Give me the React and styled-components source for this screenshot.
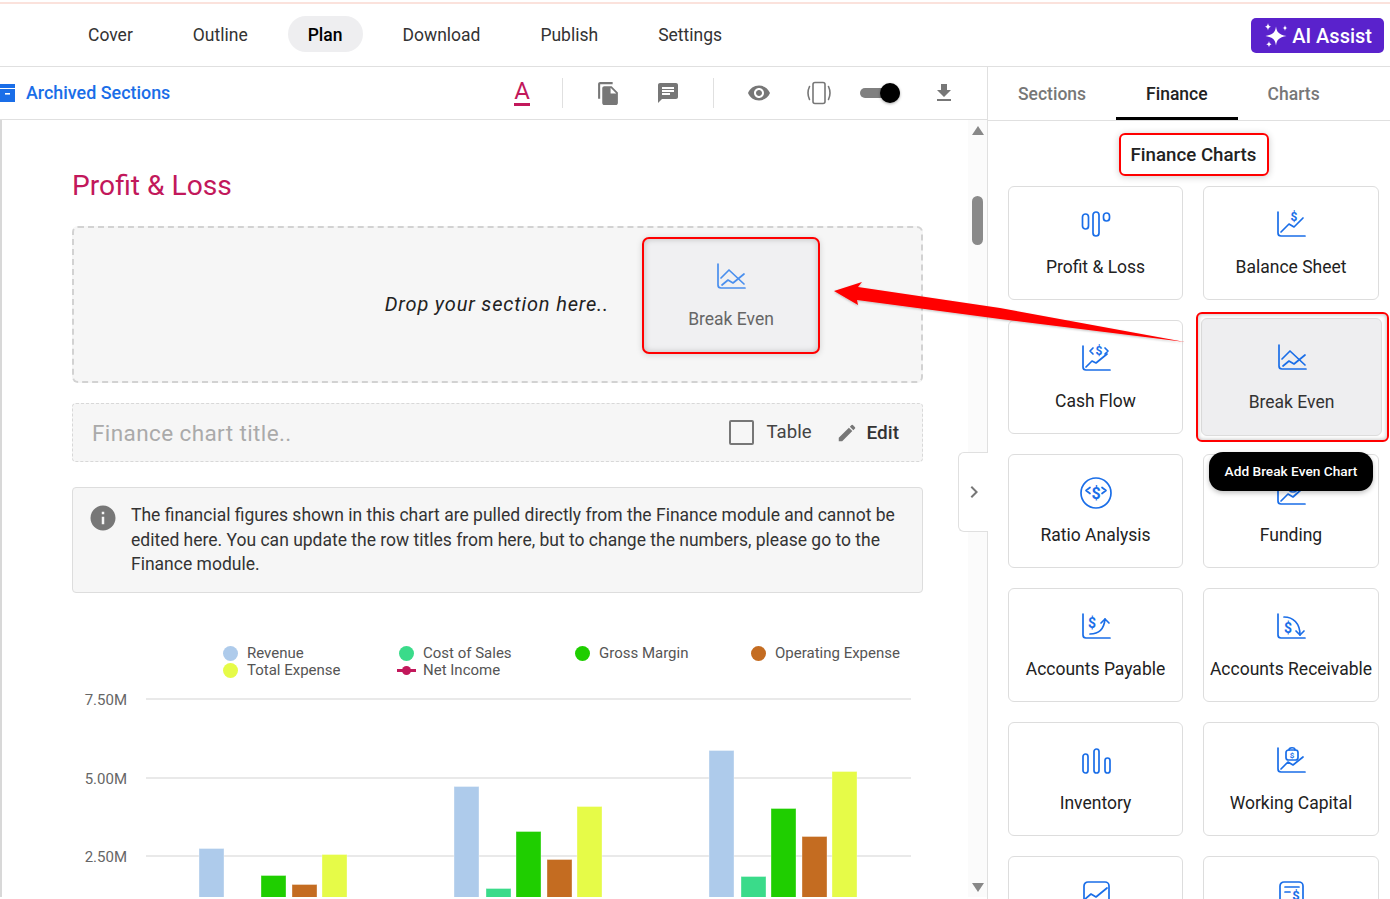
import React from 'react';
import styled, { createGlobalStyle } from 'styled-components';
import {
  MdFileCopy,
  MdChat,
  MdRemoveRedEye,
  MdFileDownload,
  MdEdit,
  MdInfo,
  MdChevronRight,
} from 'react-icons/md';

const GlobalStyle = createGlobalStyle`
  html, body { margin: 0; padding: 0; background: #fff; }
  body { font-family: Roboto, "Liberation Sans", sans-serif; overflow: hidden; }
  * { box-sizing: border-box; }
`;

const Page = styled.div`
  position: relative;
  width: 1390px;
  height: 899px;
  overflow: hidden;
  padding-top: 2px;
  background: #fff;
`;

const Stripe = styled.div`
  height: 2px;
  background: #fbe2dc;
`;

const TopNav = styled.nav`
  display: flex;
  align-items: center;
  gap: 20px;
  height: 63px;
  padding: 0 6px 2px 68px;
  border-bottom: 1px solid #e0e0e0;
`;

const NavItem = styled.a`
  display: flex;
  align-items: center;
  height: 36px;
  padding: 1px 20px 0;
  border-radius: 18px;
  font-size: 17.5px;
  color: ${props => (props.$active ? '#000' : '#333')};
  font-weight: ${props => (props.$active ? 500 : 400)};
  background: ${props => (props.$active ? '#eeeef0' : 'transparent')};
`;

const AssistButton = styled.button`
  display: flex;
  align-items: center;
  gap: 4px;
  height: 35px;
  margin-left: auto;
  margin-top: 3px;
  padding: 0 12px 0 13px;
  border: 0;
  border-radius: 5px;
  background: #5a22cc;
  color: #fff;
  font-family: inherit;
  font-size: 20px;
  font-weight: 500;
`;

const Body = styled.div`
  display: flex;
  height: 832px;
`;

const LeftPanel = styled.section`
  position: relative;
  display: flex;
  flex-direction: column;
  width: 988px;
  border-right: 1px solid #e0e0e0;
`;

const Toolbar = styled.div`
  display: flex;
  align-items: center;
  flex: none;
  height: 53px;
  padding-right: 13px;
  border-bottom: 1px solid #e0e0e0;
`;

const ArchiveLink = styled.a`
  display: flex;
  align-items: center;
  gap: 11px;
  margin-right: auto;
  padding-bottom: 1px;
  color: #1a6ee8;
  font-size: 17.9px;
  font-weight: 500;
`;

const Tool = styled.div`
  display: flex;
  align-items: center;
  justify-content: center;
  width: 60px;
  height: 40px;
  margin-left: ${props => props.$push || 0}px;
  color: #777;
`;

const ToolDivider = styled.div`
  width: 1px;
  height: 30px;
  margin: 0 ${props => props.$right}px 0 ${props => props.$left}px;
  background: #e0e0e0;
`;

const ColorLetter = styled.div`
  display: flex;
  flex-direction: column;
  align-items: center;
  width: 16px;
  color: #c2185b;
  font-size: 24px;
  line-height: 23px;
  &::after {
    content: '';
    width: 16px;
    height: 3px;
    background: #c2185b;
  }
`;

const Switch = styled.div`
  position: relative;
  width: 40px;
  height: 10px;
  margin-left: 1px;
  border-radius: 5px;
  background: #808080;
  &::after {
    content: '';
    position: absolute;
    right: 0;
    top: -5px;
    width: 20px;
    height: 20px;
    border-radius: 50%;
    background: #000;
    box-shadow: 0 1px 3px rgba(0, 0, 0, 0.35);
  }
`;

const MainArea = styled.div`
  display: flex;
  flex: 1;
  min-height: 0;
  margin-bottom: 2px;
`;

const Scroller = styled.div`
  flex: 1;
  min-width: 0;
  padding: 49px 45px 0 70px;
  border-left: 2px solid #d8d8d8;
  overflow: hidden;
`;

const ScrollTrack = styled.div`
  display: flex;
  flex-direction: column;
  align-items: center;
  flex: none;
  width: 19px;
  padding-top: 6px;
  background: #fbfbfb;
`;

const ScrollThumb = styled.div`
  width: 11px;
  height: 49px;
  margin-top: 61px;
  border-radius: 6px;
  background: #8a8a8a;
`;

const ScrollArrow = styled.div`
  width: 0;
  height: 0;
  margin-top: ${props => (props.$down ? 'auto' : 0)};
  margin-bottom: ${props => (props.$down ? '5px' : 0)};
  border-left: 6.5px solid transparent;
  border-right: 6.5px solid transparent;
  border-bottom: ${props => (props.$down ? 0 : '9px solid #888')};
  border-top: ${props => (props.$down ? '9px solid #888' : 0)};
`;

const SectionTitle = styled.h1`
  margin: 0 0 24px;
  color: #c2185b;
  font-size: 28.2px;
  font-weight: 400;
  line-height: 33px;
`;

const DropZone = styled.div`
  display: flex;
  align-items: center;
  justify-content: flex-end;
  height: 157px;
  padding: 0 101px 18px 0;
  gap: 33px;
  border: 2px dashed #d2d2d2;
  border-radius: 6px;
  background: #f6f6f6;
`;

const DropHint = styled.span`
  padding-top: 16px;
  color: #222;
  font-size: 20px;
  font-style: italic;
  letter-spacing: 0.83px;
`;

const DraggedCard = styled.div`
  display: flex;
  flex-direction: column;
  align-items: center;
  flex: none;
  width: 178px;
  height: 117px;
  padding-top: 24px;
  border: 2px solid #f00;
  border-radius: 7px;
  background: #f0f0f2;
  box-shadow: inset 0 0 6px rgba(0, 0, 0, 0.22), 0 1px 6px rgba(0, 0, 0, 0.15);
  color: #666;
  font-size: 17.5px;
`;

const TitleRow = styled.div`
  display: flex;
  align-items: center;
  height: 59px;
  margin-top: 20px;
  padding: 0 23px 0 19px;
  border: 1px dashed #d8d8d8;
  border-radius: 4px;
  background: #f6f6f6;
`;

const TitlePlaceholder = styled.span`
  margin-right: auto;
  color: #aaa;
  font-size: 22.5px;
  letter-spacing: 0.4px;
`;

const CheckBox = styled.span`
  width: 25px;
  height: 25px;
  margin-right: 13px;
  border: 2px solid #777;
  border-radius: 2px;
`;

const TableLabel = styled.span`
  margin: 0 24px 2px 0;
  color: #444;
  font-size: 18.6px;
`;

const EditLabel = styled.span`
  display: flex;
  align-items: center;
  gap: 9px;
  color: #333;
  font-size: 19px;
  font-weight: 500;
  svg { color: #777; }
`;

const InfoBox = styled.div`
  display: flex;
  gap: 13px;
  height: 106px;
  margin-top: 25px;
  padding: 15px 18px;
  border: 1px solid #ddd;
  border-radius: 4px;
  background: #f6f6f6;
  color: #333;
  font-size: 17.5px;
  line-height: 24.5px;
  svg { flex: none; margin-left: -3px; color: #777; }
`;

const Legend = styled.div`
  display: grid;
  grid-template-columns: repeat(4, 176px);
  margin: 52px 0 11px 151px;
  font-size: 15px;
  line-height: 17px;
  color: #555;
`;

const LegendItem = styled.div`
  display: flex;
  align-items: center;
  gap: 9px;
`;

const LegendDot = styled.span`
  width: 15px;
  height: 15px;
  border-radius: 50%;
  background: ${props => props.$color};
`;

const LegendLine = styled.span`
  position: relative;
  width: 19px;
  height: 3px;
  margin: 0 -2px 0 -2px;
  background: #c2185b;
  &::after {
    content: '';
    position: absolute;
    left: 5px;
    top: -3px;
    width: 9px;
    height: 9px;
    border-radius: 50%;
    background: #c2185b;
  }
`;

const ChartSvg = styled.svg`
  display: block;
  width: 851px;
  height: 207px;
`;

const CollapseTab = styled.div`
  position: absolute;
  top: 385px;
  right: -1px;
  display: flex;
  align-items: center;
  justify-content: flex-end;
  width: 30px;
  height: 80px;
  padding-right: 2px;
  border: 1px solid #e0e0e0;
  border-right: 0;
  border-radius: 6px 0 0 6px;
  background: #fff;
  color: #777;
`;

const Sidebar = styled.aside`
  flex: 1;
  min-width: 0;
  overflow: hidden;
`;

const Tabs = styled.div`
  display: flex;
  height: 54px;
  border-bottom: 1px solid #e0e0e0;
`;

const Tab = styled.a`
  display: flex;
  align-items: center;
  height: 53px;
  padding: 3px 30px 0;
  border-bottom: 3px solid ${props => (props.$active ? '#000' : 'transparent')};
  color: ${props => (props.$active ? '#222' : '#777')};
  font-size: 17.5px;
  font-weight: 500;
`;

const PanelHeading = styled.div`
  display: flex;
  align-items: center;
  justify-content: center;
  width: 150px;
  height: 43px;
  margin: 12px 0 10px 131px;
  padding-right: 1px;
  border: 2px solid #f00;
  border-radius: 6px;
  box-shadow: 0 1px 7px rgba(0, 0, 0, 0.2);
  color: #222;
  font-size: 18.7px;
  font-weight: 500;
`;

const CardGrid = styled.div`
  display: grid;
  grid-template-columns: 175px 176px;
  grid-auto-rows: 114px;
  gap: 20px;
  padding-left: 20px;
`;

const Card = styled.div`
  position: relative;
  display: flex;
  flex-direction: column;
  align-items: center;
  padding-top: ${props => (props.$selected ? 25 : 24)}px;
  border: 1px solid #ddd;
  border-radius: 6px;
  background: ${props => (props.$selected ? '#eeeef0' : '#fff')};
  color: ${props => (props.$selected ? '#333' : '#222')};
  font-size: 17.5px;
  white-space: nowrap;
  ${props =>
    props.$selected &&
    `
    margin: -2px -3px -2px -2px;
    &::after {
      content: '';
      position: absolute;
      inset: -7px -8px -7px -6px;
      border: 2px solid #f00;
      border-radius: 6px;
      box-shadow: inset 0 0 4px rgba(0, 0, 0, 0.3);
    }
  `}
`;

const IconSlot = styled.svg`
  display: block;
  flex: none;
  width: 32px;
  height: 28px;
  margin-bottom: ${props => (props.$selected ? 20 : 18)}px;
  overflow: visible;
  fill: none;
  stroke: ${props => props.$color || '#1a6ee8'};
  stroke-width: 1.7;
  stroke-linecap: round;
  stroke-linejoin: round;
  text {
    fill: ${props => props.$color || '#1a6ee8'};
    stroke: none;
    font-family: Roboto, sans-serif;
    font-weight: 700;
  }
`;

const Tooltip = styled.div`
  position: absolute;
  z-index: 2;
  top: 133px;
  left: 7px;
  display: flex;
  align-items: center;
  justify-content: center;
  width: 164px;
  height: 39px;
  padding-bottom: 2px;
  border-radius: 14px;
  background: #000;
  box-shadow: 0 2px 5px rgba(0, 0, 0, 0.25);
  color: #fff;
  font-size: 13.7px;
  font-weight: 500;
`;

const ArrowOverlay = styled.svg`
  position: absolute;
  top: 0;
  left: 0;
  width: 1390px;
  height: 899px;
  pointer-events: none;
`;

const Axis = () => <path d="M3 1v21a3 3 0 0 0 3 3h24" />;

const Dollar = ({ x, y, size = 12 }) => (
  <text x={x} y={y} fontSize={size} textAnchor="middle">
    $
  </text>
);

const icons = {
  profit: (
    <>
      <rect x="2.500" y="3" width="6" height="15" rx="3" />
      <rect x="13" y="1" width="6" height="24" rx="3" />
      <rect x="23.500" y="2" width="6" height="8" rx="3" />
    </>
  ),
  balance: (
    <>
      <Axis />
      <path d="M6 21l8-8 5 3 9-9" />
      <Dollar x="19" y="10" />
    </>
  ),
  cash: (
    <>
      <Axis />
      <path d="M6 22l6-6 4 2 11-9" />
      <path d="M13 3l-3 3 3 3M25 3l3 3-3 3" />
      <Dollar x="19" y="10" />
    </>
  ),
  breakeven: (
    <>
      <Axis />
      <path d="M6 15l8-8 15 14" />
      <path d="M7 22l6-5 5 3 11-9" />
    </>
  ),
  ratio: (
    <>
      <circle cx="16" cy="14" r="15" />
      <path d="M10 8.500l-4 3 4 3M22 8.500l4 3-4 3" />
      <text x="16" y="20" fontSize="16" textAnchor="middle">
        $
      </text>
    </>
  ),
  funding: (
    <>
      <Axis />
      <path d="M6 22l7-7 5 3 10-9" />
      <circle cx="18" cy="8" r="5" />
    </>
  ),
  payable: (
    <>
      <Axis />
      <path d="M10 21c8 0 14-4 15-15" />
      <path d="M21 10l4-4 4 4" />
      <Dollar x="12" y="15" size={14} />
    </>
  ),
  receivable: (
    <>
      <Axis />
      <path d="M9 4c9 0 16 6 16 18" />
      <path d="M21 18l4 4 4-4" />
      <Dollar x="13" y="20" size={14} />
    </>
  ),
  inventory: (
    <>
      <rect x="3" y="7" width="5" height="19" rx="2.500" />
      <rect x="14" y="2" width="5" height="24" rx="2.500" />
      <rect x="25" y="11" width="5" height="15" rx="2.500" />
    </>
  ),
  capital: (
    <>
      <Axis />
      <path d="M6 22l7-7 5 3 10-8" />
      <rect x="11" y="3" width="12" height="10" rx="2.500" />
      <path d="M14 3c0-3 6-3 6 0" />
      <Dollar x="17" y="11" size={8} />
    </>
  ),
  growth: (
    <>
      <rect x="4" y="1" width="25" height="30" rx="4" />
      <path d="M4 19l7-6 5 3 11-9" />
    </>
  ),
  statement: (
    <>
      <rect x="5" y="1" width="23" height="30" rx="4" />
      <path d="M10 6h14M10 11h5" />
      <Dollar x="21" y="19" size={13} />
    </>
  ),
};

const cards = [
  { id: 'profit', label: 'Profit & Loss' },
  { id: 'balance', label: 'Balance Sheet' },
  { id: 'cash', label: 'Cash Flow' },
  { id: 'breakeven', label: 'Break Even', selected: true },
  { id: 'ratio', label: 'Ratio Analysis' },
  { id: 'funding', label: 'Funding' },
  { id: 'payable', label: 'Accounts Payable' },
  { id: 'receivable', label: 'Accounts Receivable' },
  { id: 'inventory', label: 'Inventory' },
  { id: 'capital', label: 'Working Capital' },
  { id: 'growth', label: '' },
  { id: 'statement', label: '' },
];

const navItems = ['Cover', 'Outline', 'Plan', 'Download', 'Publish', 'Settings'];

const colors = {
  revenue: '#aecbeb',
  cost: '#3adb8a',
  gross: '#1fce00',
  opex: '#c46c21',
  total: '#e6fb48',
};

// page coordinates of the bars: x, top, series
const bars = [
  [199, 849, 'revenue'],
  [261, 876, 'gross'],
  [292, 885, 'opex'],
  [322, 855, 'total'],
  [454, 787, 'revenue'],
  [486, 889, 'cost'],
  [516, 832, 'gross'],
  [547, 860, 'opex'],
  [577, 807, 'total'],
  [709, 751, 'revenue'],
  [741, 877, 'cost'],
  [771, 809, 'gross'],
  [802, 837, 'opex'],
  [832, 772, 'total'],
];

const gridLines = [
  [699, '7.50M'],
  [778, '5.00M'],
  [856, '2.50M'],
];

function Sparkles() {
  return (
    <svg width="24" height="25" viewBox="0 0 24 25" fill="#fff">
      <path d="M12 3.500c.9 5.800 2.700 8 10.500 9.500-7.800 1.500-9.600 3.700-10.500 9.500-.9-5.800-2.700-8-10.500-9.500 7.800-1.500 9.600-3.700 10.500-9.500z" />
      <path d="M4 0c.4 2.300 1 3.200 3 3.700-2 .5-2.600 1.400-3 3.700-.4-2.300-1-3.200-3-3.700 2-.5 2.600-1.400 3-3.700z" />
      <path d="M21 2c.3 1.900.8 2.600 2.500 3-1.700.4-2.200 1.100-2.500 3-.3-1.900-.8-2.600-2.500-3 1.700-.4 2.200-1.100 2.500-3z" />
      <path d="M5 18c.3 2 .9 2.800 2.800 3.300-1.900.5-2.500 1.300-2.800 3.300-.3-2-.9-2.800-2.800-3.300 1.900-.5 2.500-1.300 2.800-3.300z" />
    </svg>
  );
}

function ArchiveIcon() {
  return (
    <svg width="15" height="18" viewBox="0 0 15 18">
      <path d="M0 0h15v4H0z" fill="#1a6ee8" />
      <path d="M0 5h15v13H0z" fill="#1a6ee8" />
      <path d="M5 9h5v1.600H5z" fill="#fff" />
    </svg>
  );
}

function PhoneShakeIcon() {
  return (
    <svg width="26" height="24" viewBox="0 0 26 24" fill="none" stroke="#777" strokeWidth="1.600">
      <rect x="7" y="1.500" width="12" height="21" rx="2" />
      <path d="M3.500 5.500Q.5 12 3.500 18.500M22.500 5.500Q25.500 12 22.500 18.500" strokeLinecap="round" />
    </svg>
  );
}

function Chart() {
  const top = 690;
  return (
    <ChartSvg viewBox={`72 ${top} 851 207`}>
      {gridLines.map(([y, label]) => (
        <g key={label}>
          <line x1="146" x2="911" y1={y} y2={y} stroke="#e2e2e2" strokeWidth="1.500" />
          <text x="127" y={y + 6} textAnchor="end" fontSize="15" fill="#666" fontFamily="Roboto, sans-serif">
            {label}
          </text>
        </g>
      ))}
      {bars.map(([x, y, series]) => (
        <rect
          key={`${x}-${series}`}
          x={x}
          y={y - 0.5}
          width="25"
          height={900 - y}
          fill={colors[series]}
          stroke="#fff"
          strokeOpacity="0.35"
        />
      ))}
    </ChartSvg>
  );
}

export default function App() {
  return (
    <Page>
      <GlobalStyle />
      <Stripe />
      <TopNav>
        {navItems.map(item => (
          <NavItem key={item} $active={item === 'Plan'}>
            {item}
          </NavItem>
        ))}
        <AssistButton>
          <Sparkles />
          AI Assist
        </AssistButton>
      </TopNav>

      <Body>
        <LeftPanel>
          <Toolbar>
            <ArchiveLink>
              <ArchiveIcon />
              Archived Sections
            </ArchiveLink>
            <Tool>
              <ColorLetter>A</ColorLetter>
            </Tool>
            <ToolDivider $left={10} $right={15} />
            <Tool>
              <MdFileCopy size={25} />
            </Tool>
            <Tool>
              <MdChat size={24} />
            </Tool>
            <ToolDivider $left={15} $right={15} />
            <Tool>
              <MdRemoveRedEye size={24} />
            </Tool>
            <Tool>
              <PhoneShakeIcon />
            </Tool>
            <Tool>
              <Switch />
            </Tool>
            <Tool $push={5}>
              <MdFileDownload size={24} />
            </Tool>
          </Toolbar>

          <MainArea>
            <Scroller>
              <SectionTitle>Profit &amp; Loss</SectionTitle>
              <DropZone>
                <DropHint>Drop your section here..</DropHint>
                <DraggedCard>
                  <IconSlot viewBox="0 0 32 28" $color="#4a8fee">
                    {icons.breakeven}
                  </IconSlot>
                  Break Even
                </DraggedCard>
              </DropZone>

              <TitleRow>
                <TitlePlaceholder>Finance chart title..</TitlePlaceholder>
                <CheckBox />
                <TableLabel>Table</TableLabel>
                <EditLabel>
                  <MdEdit size={22} />
                  Edit
                </EditLabel>
              </TitleRow>

              <InfoBox>
                <MdInfo size={30} />
                <span>
                  The financial figures shown in this chart are pulled directly from the Finance
                  module and cannot be edited here. You can update the row titles from here, but to
                  change the numbers, please go to the Finance module.
                </span>
              </InfoBox>

              <Legend>
                <LegendItem>
                  <LegendDot $color={colors.revenue} />
                  Revenue
                </LegendItem>
                <LegendItem>
                  <LegendDot $color={colors.cost} />
                  Cost of Sales
                </LegendItem>
                <LegendItem>
                  <LegendDot $color={colors.gross} />
                  Gross Margin
                </LegendItem>
                <LegendItem>
                  <LegendDot $color={colors.opex} />
                  Operating Expense
                </LegendItem>
                <LegendItem>
                  <LegendDot $color={colors.total} />
                  Total Expense
                </LegendItem>
                <LegendItem>
                  <LegendLine />
                  Net Income
                </LegendItem>
              </Legend>

              <Chart />
            </Scroller>
            <ScrollTrack>
              <ScrollArrow />
              <ScrollThumb />
              <ScrollArrow $down />
            </ScrollTrack>
          </MainArea>

          <CollapseTab>
            <MdChevronRight size={24} />
          </CollapseTab>
        </LeftPanel>

        <Sidebar>
          <Tabs>
            <Tab>Sections</Tab>
            <Tab $active>Finance</Tab>
            <Tab>Charts</Tab>
          </Tabs>
          <PanelHeading>Finance Charts</PanelHeading>
          <CardGrid>
            {cards.map(card => (
              <Card key={card.id} $selected={card.selected}>
                <IconSlot viewBox="0 0 32 28" $selected={card.selected}>
                  {icons[card.id]}
                </IconSlot>
                {card.label}
                {card.selected && <Tooltip>Add Break Even Chart</Tooltip>}
              </Card>
            ))}
          </CardGrid>
        </Sidebar>
      </Body>

      <ArrowOverlay viewBox="0 0 1390 899">
        <defs>
          <filter id="arrowShadow" x="-5%" y="-20%" width="110%" height="140%">
            <feDropShadow dx="0" dy="1" stdDeviation="1" floodOpacity="0.25" />
          </filter>
        </defs>
        <polygon
          points="834,291 862,282 858,287 1000,308 1185,342 1000,319 857,300 858,305"
          fill="#f00"
          filter="url(#arrowShadow)"
        />
      </ArrowOverlay>
    </Page>
  );
}
